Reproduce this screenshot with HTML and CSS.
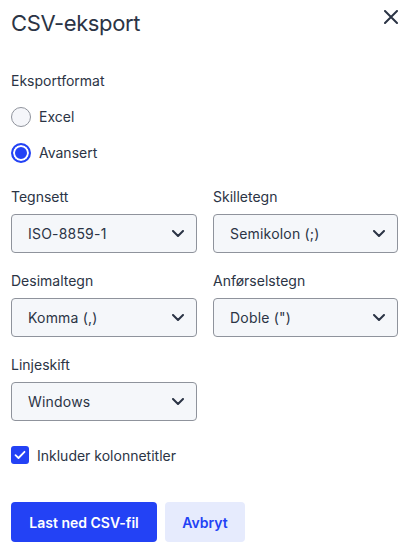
FILE: index.html
```html
<!DOCTYPE html>
<html lang="no">
<head>
<meta charset="utf-8">
<link rel="stylesheet" href="styles.css">
</head>
<body>
<div class="dialog">
  <header class="head">
    <h1 class="title">CSV-eksport</h1>
    <button class="close" aria-label="Lukk">
      <svg width="14" height="14" viewBox="0 0 14 14"><path d="M1 1L13 13M13 1L1 13" stroke="#2b3445" stroke-width="2" stroke-linecap="round"/></svg>
    </button>
  </header>

  <div class="section">
    <div class="label">Eksportformat</div>
    <label class="radio"><span class="dot"></span>Excel</label>
    <label class="radio"><span class="dot on"></span>Avansert</label>
  </div>

  <div class="grid">
    <div class="field">
      <div class="label">Tegnsett</div>
      <div class="select"><span>ISO-8859-1</span><svg width="12" height="7" viewBox="0 0 12 7"><path d="M1 1L6 6L11 1" fill="none" stroke="#2b3445" stroke-width="2" stroke-linecap="round" stroke-linejoin="round"/></svg></div>
    </div>
    <div class="field">
      <div class="label">Skilletegn</div>
      <div class="select"><span>Semikolon (;)</span><svg width="12" height="7" viewBox="0 0 12 7"><path d="M1 1L6 6L11 1" fill="none" stroke="#2b3445" stroke-width="2" stroke-linecap="round" stroke-linejoin="round"/></svg></div>
    </div>
    <div class="field">
      <div class="label">Desimaltegn</div>
      <div class="select"><span>Komma (,)</span><svg width="12" height="7" viewBox="0 0 12 7"><path d="M1 1L6 6L11 1" fill="none" stroke="#2b3445" stroke-width="2" stroke-linecap="round" stroke-linejoin="round"/></svg></div>
    </div>
    <div class="field">
      <div class="label">Anførselstegn</div>
      <div class="select"><span>Doble (")</span><svg width="12" height="7" viewBox="0 0 12 7"><path d="M1 1L6 6L11 1" fill="none" stroke="#2b3445" stroke-width="2" stroke-linecap="round" stroke-linejoin="round"/></svg></div>
    </div>
    <div class="field">
      <div class="label">Linjeskift</div>
      <div class="select"><span>Windows</span><svg width="12" height="7" viewBox="0 0 12 7"><path d="M1 1L6 6L11 1" fill="none" stroke="#2b3445" stroke-width="2" stroke-linecap="round" stroke-linejoin="round"/></svg></div>
    </div>
  </div>

  <label class="check"><span class="box"><svg width="12" height="10" viewBox="0 0 12 10"><path d="M1.5 5.2L4.5 8L10.5 1.8" fill="none" stroke="#fff" stroke-width="1.8" stroke-linecap="round" stroke-linejoin="round"/></svg></span>Inkluder kolonnetitler</label>

  <div class="actions">
    <button class="btn primary">Last ned CSV-fil</button>
    <button class="btn secondary">Avbryt</button>
  </div>
</div>
</body>
</html>
```
FILE: styles.css
```css
* { box-sizing: border-box; }
html, body { margin: 0; background: #fff; }
body {
  font-family: Inter, "Noto Sans", sans-serif;
  color: #2b3445;
  font-size: 14px;
}
.dialog { padding: 0 16px 0 11px; }
.head {
  display: flex;
  justify-content: space-between;
  align-items: flex-start;
  height: 71px;
}
.title {
  margin: 0;
  padding-top: 8px;
  font-size: 22px;
  font-weight: 400;
  line-height: 30px;
  letter-spacing: -0.4px;
}
.close {
  border: 0;
  background: none;
  padding: 0;
  margin-top: 10px;
  width: 14px;
  height: 14px;
  display: flex;
}
.section { display: flex; flex-direction: column; }
.label { line-height: 20px; height: 20px; }
.section .label { margin-bottom: 16px; }
.radio {
  display: flex;
  align-items: center;
  gap: 8px;
  height: 20px;
  margin-bottom: 16px;
  line-height: 20px;
}
.dot {
  width: 20px;
  height: 20px;
  border-radius: 50%;
  border: 1px solid #8f939c;
  background: #f5f6fa;
  flex: none;
}
.dot.on {
  border: 2px solid #2342f5;
  background: #2342f5;
  box-shadow: inset 0 0 0 2px #fff;
}
.grid {
  display: grid;
  grid-template-columns: 186px 185px;
  column-gap: 16px;
  row-gap: 18px;
  margin-top: 8px;
}
.field .label { margin-bottom: 7px; }
.select {
  height: 39px;
  border: 1px solid #8f939c;
  border-radius: 4px;
  background: #f5f7fa;
  display: flex;
  align-items: center;
  justify-content: space-between;
  padding: 0 12px 0 16px;
  letter-spacing: 0.2px;
}
.check {
  display: flex;
  align-items: center;
  gap: 8px;
  margin-top: 25px;
  height: 18px;
  font-size: 14px;
}
.box {
  width: 18px;
  height: 18px;
  border-radius: 3px;
  background: #2342f5;
  display: flex;
  align-items: center;
  justify-content: center;
}
.actions {
  display: flex;
  gap: 8px;
  margin-top: 38px;
}
.btn {
  height: 40px;
  border: 0;
  border-radius: 4px;
  font-family: Inter, "Noto Sans", sans-serif;
  font-size: 14px;
  font-weight: 600;
  padding: 0 16px;
}
.primary { background: #2342f5; color: #fff; width: 146px; }
.secondary { background: #e6ebfd; color: #2342f5; width: 80px; }
```
